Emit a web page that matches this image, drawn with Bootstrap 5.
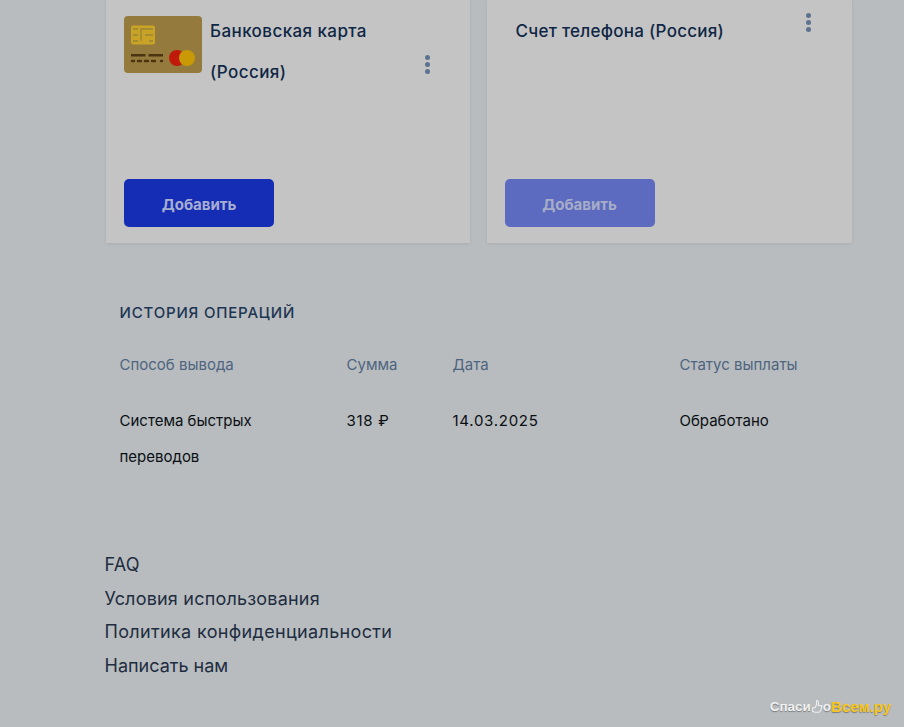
<!DOCTYPE html>
<html lang="ru">
<head>
<meta charset="utf-8">
<title>Вывод средств</title>
<link href="https://cdn.jsdelivr.net/npm/bootstrap@5.3.0/dist/css/bootstrap.min.css" rel="stylesheet">
<style>
html,body{height:727px;overflow:hidden}
body{background:#b8bcbf;font-family:"Inter","Noto Sans",sans-serif;color:#0f2744}
.page-wrap{padding:0 52px 0 105px;display:flex;flex-direction:column}
.pay-row{display:flex;gap:17px;padding-left:1px}
.pay-card{width:364px;height:243px;background:#c4c4c4;box-shadow:0 1px 3px rgba(0,0,0,.08);padding:0 18px 16px;display:flex;flex-direction:column;justify-content:space-between}
.pay-card+.pay-card{width:366px}
.pay-head{display:flex;position:relative}
.card-pic{width:78px;height:57px;margin-top:16px;flex:none;display:block}
.pay-title{font-size:17px;font-weight:500;line-height:41px;letter-spacing:.42px;color:#0f2744;margin:11px 0 0 8px;width:190px}
.pay-title-wide{margin:11px 0 0 11px;width:auto;white-space:nowrap;letter-spacing:.26px}
.kebab{display:flex;flex-direction:column;gap:2px;position:absolute}
.kebab i{display:block;width:5px;height:5px;border-radius:50%;background:#5c738f}
.kebab-a{left:300.500px;top:55px}
.kebab-b{left:301.500px;top:13px}
.add-btn{width:150px;height:48px;background:#152cb5;border:0;border-radius:5px;color:#a7aed0;font-weight:700;font-size:15px;padding:4px 0 0}
.add-btn:disabled{background:#5c6bbf;color:#a7acc8;opacity:1}
.hist{padding:0 0 0 14.500px;margin-top:60px}
.hist-title{font-size:15px;font-weight:500;letter-spacing:.82px;color:#1c3553;margin:0;line-height:20px}
.hist-grid{display:grid;grid-template-columns:227px 106px 227px 1fr;margin-top:30px;font-size:15px}
.hist-grid>div{line-height:36px}
.hist-h{color:#4e6480;padding-bottom:26px;line-height:24px!important}
.hist-c{color:#0a0f14}
.hist-wrap{padding-right:60px}
.hist-num{letter-spacing:.72px}
.foot-links{margin-top:73px;font-size:18px;line-height:33.6px;letter-spacing:.2px;margin-left:-.5px}
.foot-links a{display:block;color:#1e2d40;text-decoration:none}
.foot-links .foot-wide{letter-spacing:.34px}
.foot-links .foot-tight{letter-spacing:0}
.wm{position:absolute;right:13px;bottom:10px;display:flex;align-items:center;font:700 13.500px/20px "Liberation Sans",sans-serif;color:#f1f1f1;text-shadow:0 1px 1px rgba(0,0,0,.35)}
.wm b{color:#f9c518;font-size:15px}
</style>
</head>
<body>
<div class="page-wrap">
  <div class="pay-row">
    <div class="pay-card">
      <div class="pay-head">
        <svg class="card-pic" viewBox="0 0 78 57">
          <rect width="78" height="57" rx="4" fill="#947a3c"/>
          <rect x="7" y="9.500" width="24" height="19" rx="2" fill="#c9a326"/>
          <path d="M9 13h5M9 19h5M9 25h5M17 25v-12h12M21 19h8M25 25h4" stroke="#a58c33" stroke-width="1.800" fill="none"/>
          <rect x="7" y="38" width="14.500" height="2.500" fill="#4a3510"/>
          <rect x="24.500" y="38" width="14.500" height="2.500" fill="#4a3510"/>
          <path d="M8 45h2M14 45h3M21 45h3M28 45h3M37 45h1" stroke="#4a3510" stroke-width="2.400" stroke-linecap="round"/>
          <circle cx="53" cy="42" r="8" fill="#bf1a0a"/>
          <circle cx="63" cy="42" r="8" fill="#c99a06"/>
        </svg>
        <div class="pay-title">Банковская карта (Россия)</div>
        <div class="kebab kebab-a"><i></i><i></i><i></i></div>
      </div>
      <button class="btn add-btn" type="button">Добавить</button>
    </div>
    <div class="pay-card">
      <div class="pay-head">
        <div class="pay-title pay-title-wide">Счет телефона (Россия)</div>
        <div class="kebab kebab-b"><i></i><i></i><i></i></div>
      </div>
      <button class="btn add-btn" type="button" disabled>Добавить</button>
    </div>
  </div>
  <section class="hist">
    <h2 class="hist-title">ИСТОРИЯ ОПЕРАЦИЙ</h2>
    <div class="hist-grid">
      <div class="hist-h">Способ вывода</div><div class="hist-h">Сумма</div><div class="hist-h">Дата</div><div class="hist-h">Статус выплаты</div>
      <div class="hist-c hist-wrap">Система быстрых переводов</div><div class="hist-c hist-num">318 ₽</div><div class="hist-c hist-num">14.03.2025</div><div class="hist-c">Обработано</div>
    </div>
  </section>
  <nav class="foot-links">
    <a href="#">FAQ</a>
    <a href="#">Условия использования</a>
    <a class="foot-wide" href="#">Политика конфиденциальности</a>
    <a class="foot-tight" href="#">Написать нам</a>
  </nav>
</div>
<div class="wm"><span>Спаси</span><svg width="12" height="20" viewBox="0 0 15 20"><path d="M2 11h3l2-4V2c2 0 3 2 2 6h4c1 0 1 2 0 2 1 1 0 2-.5 2.500 .5 1 0 2-1 2.500 0 1-1 1.500-2 1.500H5l-3-1z" fill="none" stroke="#eee" stroke-width="1.300"/></svg><span>о</span><b>Всем.ру</b></div>
<script src="https://cdn.jsdelivr.net/npm/bootstrap@5.3.0/dist/js/bootstrap.bundle.min.js"></script>
</body>
</html>
